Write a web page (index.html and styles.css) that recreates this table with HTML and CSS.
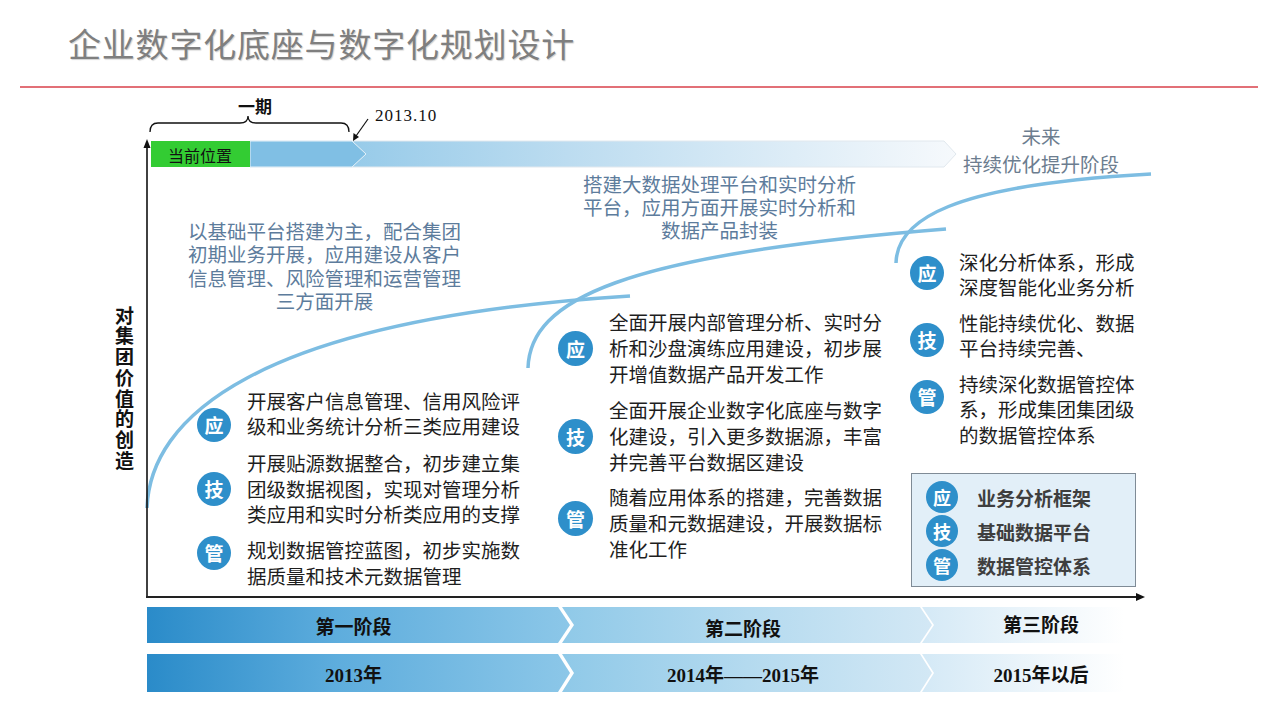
FILE: index.html
```html
<!DOCTYPE html>
<html lang="zh-CN">
<head>
<meta charset="utf-8">
<title>企业数字化底座与数字化规划设计</title>
<link rel="stylesheet" href="styles.css">
</head>
<body>
<div class="page">
  <header class="header">
    <h1 class="title">企业数字化底座与数字化规划设计</h1>
  </header>

  <section class="chart">
    <svg class="canvas" viewBox="0 88 1280 519" width="1280" height="519">
      <defs>
        <linearGradient id="bandGrad" x1="0" y1="0" x2="1" y2="0">
          <stop offset="0" stop-color="#86c3e6"/>
          <stop offset="0.45" stop-color="#bcdcf0"/>
          <stop offset="1" stop-color="#f6f9fc"/>
        </linearGradient>
      </defs>
      <!-- top progress band -->
      <polygon points="250,141 944,141 956,154 944,167 250,167" fill="url(#bandGrad)" stroke="#e1e8ee" stroke-width="1"/>
      <polygon points="250,141 352,141 366,154 352,167 250,167" fill="#80bfe4" stroke="#e6f1f8" stroke-width="1"/>
      <rect x="151" y="141" width="99" height="26" fill="#33cc33"/>
      <text class="svg-label" x="200" y="155" text-anchor="middle" dominant-baseline="central">当前位置</text>

      <!-- brace + phase label -->
      <path d="M150,132 Q150,123 158,123 L240,123 Q248,123 248,116 Q248,123 256,123 L341,123 Q349,123 349,132" fill="none" stroke="#111" stroke-width="1.3"/>
      <text class="svg-phase" x="255" y="105" text-anchor="middle" dominant-baseline="central">一期</text>
      <text class="svg-date" x="375" y="115" dominant-baseline="central">2013.10</text>
      <line x1="368" y1="119" x2="356" y2="136" stroke="#111" stroke-width="1.2"/>
      <polygon points="353,141 353.5,133 359,137" fill="#111"/>

      <!-- value curves -->
      <path d="M147,508 C150,420 250,320 630,296" fill="none" stroke="#7dbde2" stroke-width="3.5"/>
      <path d="M528,368 C530,300 620,255 946,229" fill="none" stroke="#7dbde2" stroke-width="3.5"/>
      <path d="M896,263 C897,220 950,185 1151,174" fill="none" stroke="#7dbde2" stroke-width="3.5"/>

      <!-- axes -->
      <line x1="147" y1="597" x2="147" y2="146" stroke="#111" stroke-width="1.6"/>
      <polygon points="147,139 143.5,148 150.5,148" fill="#111"/>
      <line x1="146" y1="597" x2="1138" y2="597" stroke="#222" stroke-width="2"/>
      <polygon points="1145,597 1136,593 1136,601" fill="#111"/>
    </svg>

    <div class="cols">
      <div class="axis-label">对集团价值的创造</div>

      <div class="col col-1">
        <p class="desc desc-1">以基础平台搭建为主，配合集团<br>初期业务开展，应用建设从客户<br>信息管理、风险管理和运营管理<br>三方面开展</p>
        <div class="items items-1">
          <div class="item"><span class="ic t18">应</span><p class="txt">开展客户信息管理、信用风险评<br>级和业务统计分析三类应用建设</p></div>
          <div class="item"><span class="ic t20">技</span><p class="txt">开展贴源数据整合，初步建立集<br>团级数据视图，实现对管理分析<br>类应用和实时分析类应用的支撑</p></div>
          <div class="item"><span class="ic tm3">管</span><p class="txt">规划数据管控蓝图，初步实施数<br>据质量和技术元数据管理</p></div>
        </div>
      </div>

      <div class="col col-2">
        <p class="desc desc-2">搭建大数据处理平台和实时分析<br>平台，应用方面开展实时分析和<br>数据产品封装</p>
        <div class="items items-2">
          <div class="item"><span class="ic lg t21">应</span><p class="txt">全面开展内部管理分析、实时分<br>析和沙盘演练应用建设，初步展<br>开增值数据产品开发工作</p></div>
          <div class="item"><span class="ic lg t21">技</span><p class="txt">全面开展企业数字化底座与数字<br>化建设，引入更多数据源，丰富<br>并完善平台数据区建设</p></div>
          <div class="item"><span class="ic lg t15">管</span><p class="txt">随着应用体系的搭建，完善数据<br>质量和元数据建设，开展数据标<br>准化工作</p></div>
        </div>
      </div>

      <div class="col col-3">
        <p class="desc desc-3">未来<br>持续优化提升阶段</p>
        <div class="items items-3">
          <div class="item"><span class="ic t5">应</span><p class="txt">深化分析体系，形成<br>深度智能化业务分析</p></div>
          <div class="item"><span class="ic t11">技</span><p class="txt">性能持续优化、数据<br>平台持续完善、</p></div>
          <div class="item"><span class="ic t7">管</span><p class="txt">持续深化数据管控体<br>系，形成集团集团级<br>的数据管控体系</p></div>
        </div>
        <div class="legend">
          <div class="legend-row"><span class="ic sm">应</span><span class="legend-txt">业务分析框架</span></div>
          <div class="legend-row"><span class="ic sm">技</span><span class="legend-txt">基础数据平台</span></div>
          <div class="legend-row"><span class="ic sm">管</span><span class="legend-txt">数据管控体系</span></div>
        </div>
      </div>
    </div>
  </section>

  <section class="bars">
    <div class="bar-row r1">
      <div class="seg seg-1">第一阶段</div>
      <div class="seg seg-2">第二阶段</div>
      <div class="seg seg-3">第三阶段</div>
    </div>
    <div class="bar-row r2">
      <div class="seg seg-1">2013年</div>
      <div class="seg seg-2">2014年——2015年</div>
      <div class="seg seg-3">2015年以后</div>
    </div>
  </section>
</div>
</body>
</html>
```

FILE: styles.css
```css
* { box-sizing: border-box; }

html, body {
  margin: 0;
  padding: 0;
  background: #ffffff;
}

body {
  font-family: "Liberation Sans", "Noto Sans CJK SC", sans-serif;
  color: #222;
}

.page {
  width: 1280px;
  height: 720px;
  overflow: hidden;
  position: relative;
}

/* ---------- header ---------- */
.header {
  height: 88px;
  margin: 0 22px 0 20px;
  border-bottom: 2px solid #e27077;
  padding-left: 48px;
}

.title {
  margin: 0;
  font-family: "Noto Sans CJK SC", sans-serif;
  font-size: 33px;
  font-weight: 400;
  line-height: 86px;
  letter-spacing: 0.8px;
  color: #7f7f7f;
  text-shadow: 1px 1px 1px rgba(0, 0, 0, 0.18);
}

/* ---------- chart ---------- */
.chart {
  position: relative;
  height: 519px;
}

.canvas {
  position: absolute;
  left: 0;
  top: 0;
  display: block;
}

.svg-label {
  font-family: "Noto Sans CJK SC", sans-serif;
  font-size: 16px;
  fill: #111;
}

.svg-phase {
  font-family: "Noto Sans CJK SC", sans-serif;
  font-size: 17px;
  font-weight: 700;
  fill: #111;
}

.svg-date {
  font-family: "Liberation Serif", serif;
  font-size: 17px;
  letter-spacing: 1px;
  fill: #111;
}

.cols {
  position: relative;
  display: flex;
  align-items: flex-start;
  padding-left: 113px;
  height: 100%;
}

.axis-label {
  writing-mode: vertical-rl;
  width: 22px;
  margin-top: 218px;
  font-family: "Noto Sans CJK SC", sans-serif;
  font-size: 19px;
  font-weight: 700;
  line-height: 22px;
  letter-spacing: 1.7px;
  color: #111;
}

.col {
  display: flex;
  flex-direction: column;
}

.col-1 { width: 334px; margin-left: 52px; }
.col-2 { width: 325px; margin-left: 37px; }
.col-3 { width: 226px; margin-left: 27px; }

.desc {
  margin: 0;
  font-size: 19.5px;
  text-align: center;
  white-space: nowrap;
  color: #5d7c9c;
}

.desc-1 {
  width: 275px;
  margin-top: 133px;
  line-height: 23.4px;
}

.desc-2 {
  margin-top: 85.5px;
  line-height: 23px;
  padding-right: 2px;
}

.desc-3 {
  margin-top: 35px;
  padding-left: 36px;
  line-height: 28px;
  color: #6c7d8f;
}

.items {
  display: flex;
  flex-direction: column;
}

.items-1 { margin-top: 75px; gap: 10.5px; padding-left: 10px; }
.items-2 { margin-top: 67.5px; gap: 9.5px; }
.items-3 { margin-top: 71.5px; gap: 10px; }

.item {
  display: flex;
  align-items: flex-start;
  gap: 16px;
}

.items-3 .item { gap: 15px; }

.txt {
  margin: 0;
  font-size: 19.5px;
  line-height: 25.5px;
  white-space: nowrap;
  color: #1e1e1e;
}

.items-2 .txt { line-height: 26px; }

.ic {
  flex: 0 0 auto;
  width: 34px;
  height: 34px;
  border-radius: 50%;
  background: #2e8fca;
  color: #ffffff;
  font-family: "Noto Sans CJK SC", sans-serif;
  font-size: 19px;
  font-weight: 700;
  line-height: 34px;
  text-align: center;
}

.ic.lg {
  width: 35px;
  height: 35px;
  line-height: 35px;
}

.ic.sm {
  width: 32px;
  height: 32px;
  line-height: 32px;
  font-size: 18px;
}

.t5 { margin-top: 5.5px; }
.t7 { margin-top: 7.5px; }
.t11 { margin-top: 11.5px; }
.t15 { margin-top: 15.5px; }
.t18 { margin-top: 18px; }
.t20 { margin-top: 20px; }
.t21 { margin-top: 21px; }
.tm3 { margin-top: -3px; }

.legend {
  width: 225px;
  height: 114px;
  margin-top: 24px;
  margin-left: 1px;
  padding: 6px 0 4px 14px;
  background: #e2eff8;
  border: 1px solid #7f8b96;
}

.legend-row {
  display: flex;
  align-items: center;
  gap: 19px;
  height: 34px;
}

.legend-txt {
  font-size: 19px;
  font-weight: 700;
  color: #3e3e3e;
  white-space: nowrap;
}

/* ---------- bottom phase bars ---------- */
.bars {
  padding-left: 147px;
}

.bar-row {
  display: flex;
}

.bar-row.r1 { height: 36px; }
.bar-row.r2 { height: 38px; margin-top: 11px; }

.seg {
  display: flex;
  align-items: center;
  justify-content: center;
  font-family: "Liberation Serif", "Noto Sans CJK SC", serif;
  font-size: 19px;
  font-weight: 700;
  color: #111;
  white-space: nowrap;
}

.seg-1 {
  width: 423px;
  padding-right: 10px;
  background: linear-gradient(90deg, #2a8bc9 0%, #5eaddd 45%, #8cc7e8 100%);
  clip-path: polygon(0 0, calc(100% - 12px) 0, 100% 50%, calc(100% - 12px) 100%, 0 100%);
}

.seg-2 {
  width: 370px;
  margin-left: -8px;
  padding-right: 8px;
  background: linear-gradient(90deg, #8fc9e8 0%, #b4daef 50%, #d3e8f5 100%);
  clip-path: polygon(0 0, calc(100% - 12px) 0, 100% 50%, calc(100% - 12px) 100%, 0 100%, 12px 50%);
}

.seg-3 {
  width: 238px;
  margin-left: -10px;
  background: linear-gradient(90deg, #d4e9f6 0%, #eef6fb 50%, #ffffff 85%);
  clip-path: polygon(0 0, 100% 0, 100% 100%, 0 100%, 12px 50%);
}

.r1 .seg-2 { padding-top: 4px; }
.r1 .seg-3 { padding-bottom: 4px; }
```
